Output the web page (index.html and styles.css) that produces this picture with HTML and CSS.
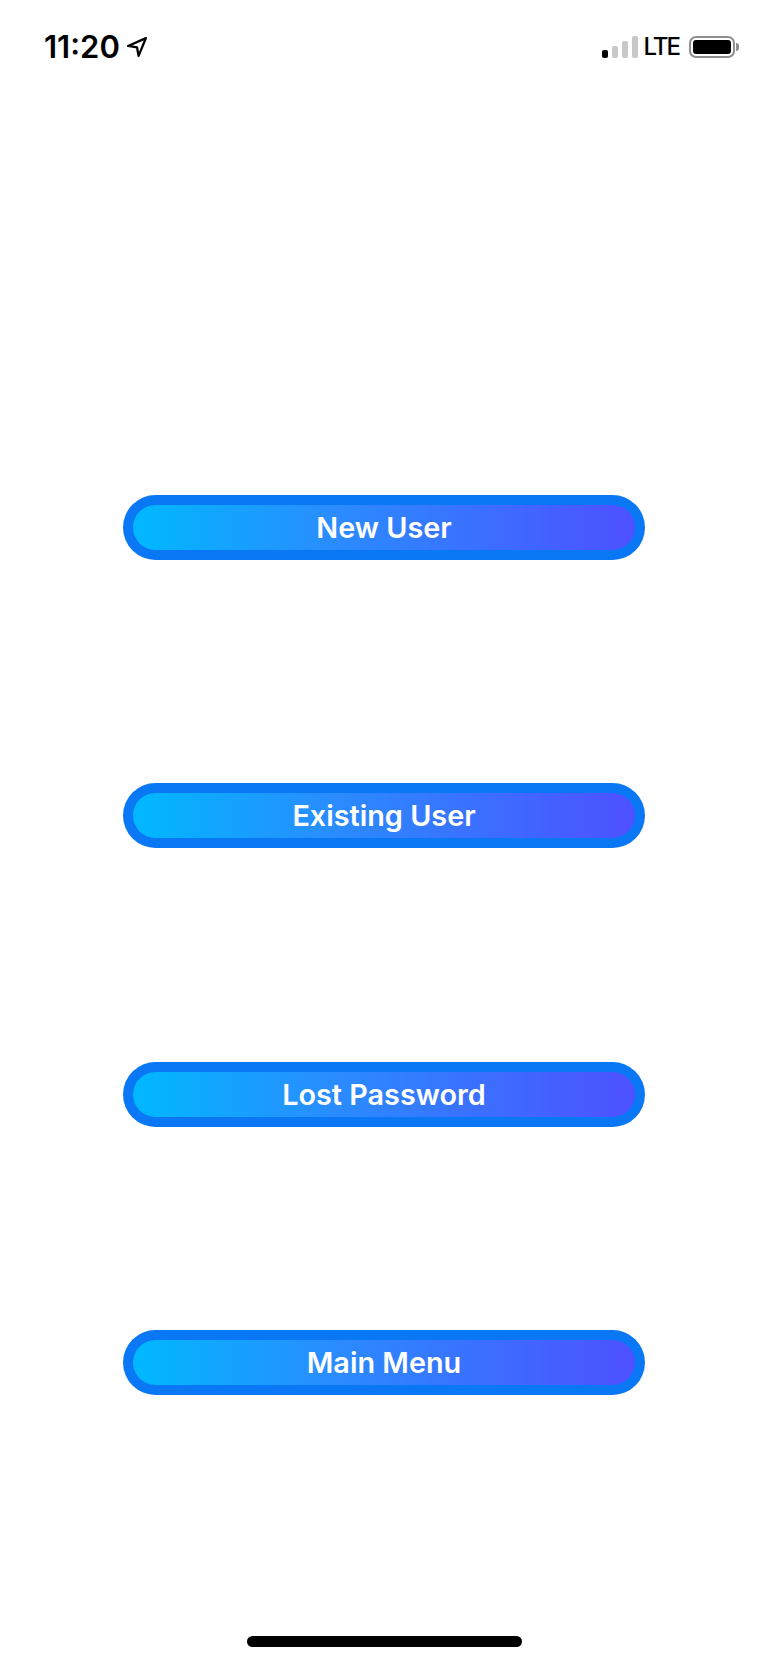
FILE: index.html
```html
<!DOCTYPE html>
<html lang="en">
<head>
  <meta charset="UTF-8">
  <meta name="viewport" content="width=device-width, initial-scale=1.0">
  <title>Account</title>
  <link rel="stylesheet" href="styles.css">
</head>
<body>
  <div class="screen">
    <div class="status-bar">
      <div class="status-left">
        <span class="status-time">11:20</span>
        <svg class="status-arrow" width="22" height="22" viewBox="0 0 21 21">
          <path d="M19 2 L2 9.5 L10.5 10.8 L12 19 Z" fill="none" stroke="#000" stroke-width="2.2" stroke-linejoin="round"/>
        </svg>
      </div>
      <div class="status-right">
        <div class="signal">
          <span class="signal-bar signal-on"></span>
          <span class="signal-bar signal-2"></span>
          <span class="signal-bar signal-3"></span>
          <span class="signal-bar signal-4"></span>
        </div>
        <span class="status-lte">LTE</span>
        <div class="battery">
          <div class="battery-fill"></div>
        </div>
        <div class="battery-nub"></div>
      </div>
    </div>

    <div class="menu">
      <button class="btn btn-first"><span class="btn-label">New User</span></button>
      <button class="btn btn-second"><span class="btn-label">Existing User</span></button>
      <button class="btn btn-third"><span class="btn-label">Lost Password</span></button>
      <button class="btn btn-fourth"><span class="btn-label">Main Menu</span></button>
    </div>

    <div class="home-bar"></div>
  </div>
</body>
</html>
```

FILE: styles.css
```css
* {
  margin: 0;
  padding: 0;
  box-sizing: border-box;
}

body {
  width: 768px;
  height: 1663px;
  background: #fff;
  font-family: Inter, Roboto, sans-serif;
  color: #000;
  overflow: hidden;
}

.screen {
  height: 1663px;
  display: flex;
  flex-direction: column;
}

.status-bar {
  height: 95px;
  padding: 30px 29px 0 44px;
  display: flex;
  justify-content: space-between;
  align-items: flex-start;
}

.status-left {
  display: flex;
  align-items: center;
  gap: 6px;
}

.status-time {
  font-size: 31px;
  line-height: 34px;
  font-weight: 600;
}

.status-right {
  display: flex;
  align-items: center;
  height: 34px;
}

.signal {
  display: flex;
  align-items: flex-end;
  gap: 4px;
  height: 22px;
  margin-right: 6px;
}

.signal-bar {
  width: 6px;
  border-radius: 2px;
  background: #c8c8c8;
}

.signal-on { height: 8px; background: #000; }
.signal-2 { height: 12px; }
.signal-3 { height: 17px; }
.signal-4 { height: 22px; }

.status-lte {
  font-size: 24px;
  line-height: 34px;
  font-weight: 500;
  letter-spacing: -2px;
  margin-right: 10px;
}

.battery {
  width: 46px;
  height: 22px;
  padding: 2px;
  border: 2px solid #8e8e8e;
  border-radius: 7px;
}

.battery-fill {
  height: 100%;
  background: #000;
  border-radius: 3px;
}

.battery-nub {
  width: 3px;
  height: 8px;
  margin-left: 1px;
  background: #8e8e8e;
  border-radius: 0 3px 3px 0;
}

.menu {
  padding: 400px 123px 0;
  display: flex;
  flex-direction: column;
}

.btn {
  width: 522px;
  height: 65px;
  padding: 10px;
  border: none;
  border-radius: 33px;
  background: #0a78f5;
}

.btn-label {
  display: flex;
  align-items: center;
  justify-content: center;
  height: 100%;
  border-radius: 23px;
  background: linear-gradient(90deg, #00b8ff 0%, #2a8cff 40%, #4d50ff 100%);
  color: #fff;
  font-family: Inter, Roboto, sans-serif;
  font-size: 28.8px;
  font-weight: 600;
}

.btn-second { margin-top: 223px; }
.btn-third { margin-top: 214px; }
.btn-fourth { margin-top: 203px; }

.home-bar {
  width: 275px;
  height: 11px;
  margin: auto auto 16px;
  background: #000;
  border-radius: 6px;
}
```
